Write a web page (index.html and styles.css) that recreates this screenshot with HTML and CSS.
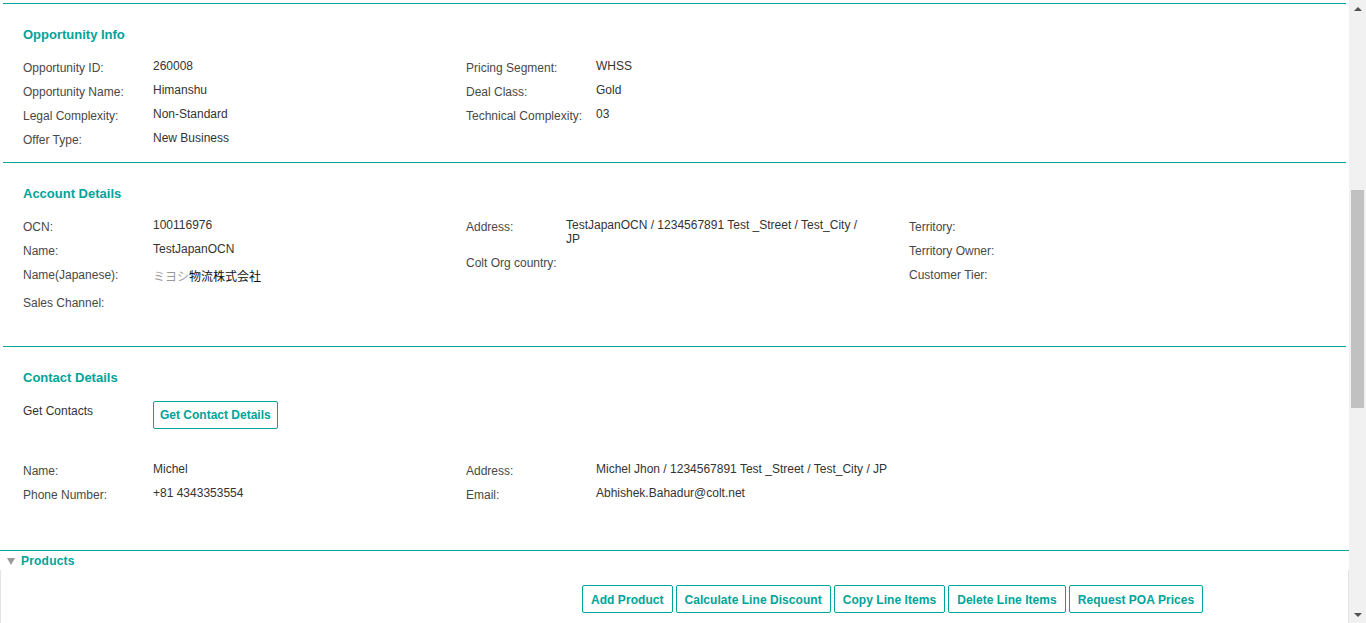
FILE: index.html
```html
<!DOCTYPE html>
<html lang="en">
<head>
<meta charset="utf-8">
<title>Opportunity</title>
<link rel="stylesheet" href="styles.css">
</head>
<body>
<div class="app">
  <div class="main">
    <section class="panel panel--opp">
      <h2 class="panel-title">Opportunity Info</h2>
      <div class="fields">
        <div class="col">
          <div class="row row--first"><span class="label">Opportunity ID:</span><span class="value">260008</span></div>
          <div class="row"><span class="label">Opportunity Name:</span><span class="value">Himanshu</span></div>
          <div class="row"><span class="label">Legal Complexity:</span><span class="value">Non-Standard</span></div>
          <div class="row"><span class="label">Offer Type:</span><span class="value">New Business</span></div>
        </div>
        <div class="col">
          <div class="row row--first"><span class="label">Pricing Segment:</span><span class="value">WHSS</span></div>
          <div class="row"><span class="label">Deal Class:</span><span class="value">Gold</span></div>
          <div class="row"><span class="label">Technical Complexity:</span><span class="value">03</span></div>
        </div>
      </div>
    </section>

    <section class="panel panel--acc">
      <h2 class="panel-title">Account Details</h2>
      <div class="fields">
        <div class="col">
          <div class="row row--first"><span class="label">OCN:</span><span class="value">100116976</span></div>
          <div class="row"><span class="label">Name:</span><span class="value">TestJapanOCN</span></div>
          <div class="row"><span class="label">Name(Japanese):</span><span class="value value--jp"><span class="kana">ミヨシ</span>物流株式会社</span></div>
          <div class="row"><span class="label">Sales Channel:</span><span class="value"></span></div>
        </div>
        <div class="col">
          <div class="row"><span class="label label--narrow">Address:</span><span class="value value--wrap">TestJapanOCN / 1234567891 Test _Street / Test_City / JP</span></div>
          <div class="row"><span class="label label--narrow">Colt Org country:</span><span class="value"></span></div>
        </div>
        <div class="col">
          <div class="row"><span class="label">Territory:</span><span class="value"></span></div>
          <div class="row"><span class="label">Territory Owner:</span><span class="value"></span></div>
          <div class="row"><span class="label">Customer Tier:</span><span class="value"></span></div>
        </div>
      </div>
    </section>

    <section class="panel panel--contact">
      <h2 class="panel-title">Contact Details</h2>
      <div class="get-row">
        <span class="label label--dark">Get Contacts</span>
        <button class="btn btn--small" type="button">Get Contact Details</button>
      </div>
      <div class="fields fields--contact">
        <div class="col">
          <div class="row"><span class="label">Name:</span><span class="value">Michel</span></div>
          <div class="row"><span class="label">Phone Number:</span><span class="value">+81 4343353554</span></div>
        </div>
        <div class="col">
          <div class="row"><span class="label">Address:</span><span class="value">Michel Jhon / 1234567891 Test _Street / Test_City / JP</span></div>
          <div class="row"><span class="label">Email:</span><span class="value">Abhishek.Bahadur@colt.net</span></div>
        </div>
      </div>
    </section>

    <section class="products">
      <div class="products-head">
        <span class="caret"></span>
        <span class="products-title">Products</span>
      </div>
      <div class="products-body">
        <div class="toolbar">
          <button class="btn btn--tool" type="button">Add Product</button>
          <button class="btn btn--tool" type="button">Calculate Line Discount</button>
          <button class="btn btn--tool" type="button">Copy Line Items</button>
          <button class="btn btn--tool" type="button">Delete Line Items</button>
          <button class="btn btn--tool" type="button">Request POA Prices</button>
        </div>
      </div>
    </section>
  </div>

  <div class="scrollbar">
    <div class="sb-btn"><span class="sb-arrow sb-arrow--up"></span></div>
    <div class="sb-track"><div class="sb-thumb"></div></div>
    <div class="sb-btn"><span class="sb-arrow sb-arrow--down"></span></div>
  </div>
</div>
</body>
</html>
```

FILE: styles.css
```css
* { box-sizing: border-box; }

html, body {
  margin: 0;
  padding: 0;
  background: #ffffff;
}

body {
  font-family: "Liberation Sans", Arial, "Noto Sans CJK JP", sans-serif;
  font-size: 12px;
  color: #333333;
  overflow: hidden;
}

.app {
  display: flex;
  width: 1366px;
  height: 623px;
}

.main {
  width: 1349px;
  height: 623px;
  overflow: hidden;
  padding-top: 3px;
}

/* ---------- panels ---------- */
.panel {
  margin-left: 3px;
  width: 1343px;
  border-top: 1px solid #00a499;
  padding: 23px 0 0 20px;
}

.panel--opp { padding-bottom: 15px; }
.panel--acc { padding-bottom: 36px; }
.panel--contact { padding-bottom: 48px; }

.panel-title {
  margin: 0;
  font-size: 13px;
  line-height: 16px;
  font-weight: bold;
  color: #00a499;
}

.fields {
  margin-top: 16px;
  display: grid;
  grid-template-columns: 443px 443px 443px;
}

.fields--contact { margin-top: 33px; }

.col {
  display: flex;
  flex-direction: column;
  gap: 8px;
}

.row {
  display: flex;
  align-items: flex-start;
}

.label {
  flex: 0 0 130px;
  width: 130px;
  padding-top: 2px;
  line-height: 14px;
  color: #484848;
}

.label--narrow {
  flex-basis: 100px;
  width: 100px;
}

.label--dark { color: #333333; }

.value {
  line-height: 14px;
  color: #333333;
  min-height: 14px;
}

.value--wrap { width: 300px; }

.value--jp {
  padding-top: 2px;
  line-height: 18px;
  color: #111111;
  font-family: "Liberation Sans", "Noto Sans CJK JP", sans-serif;
}

.kana { color: #9a9a9a; }

/* ---------- contact ---------- */
.get-row {
  margin-top: 15px;
  display: flex;
  align-items: flex-start;
}

.get-row .label { padding-top: 3px; }

/* ---------- buttons ---------- */
.btn {
  height: 28px;
  padding: 0 7px;
  border: 1px solid #00a499;
  border-radius: 2px;
  background: #ffffff;
  color: #00a499;
  font-family: "Liberation Sans", Arial, sans-serif;
  font-size: 12px;
  font-weight: bold;
  line-height: 26px;
  white-space: nowrap;
  cursor: pointer;
}

.btn--small { padding: 0 6px; }

.btn--tool {
  padding: 1px 8px 0 8px;
  letter-spacing: 0.05px;
}

/* ---------- products ---------- */
.products {
  width: 1349px;
  border-top: 1px solid #00a499;
}

.products-head {
  height: 19px;
  display: flex;
  align-items: center;
  padding-left: 7px;
}

.caret {
  width: 0;
  height: 0;
  border-left: 4px solid transparent;
  border-right: 4px solid transparent;
  border-top: 7px solid #9a9a9a;
  margin-right: 6px;
  margin-top: 1px;
}

.products-title {
  font-size: 12px;
  font-weight: bold;
  color: #00a499;
  line-height: 16px;
  letter-spacing: 0.2px;
}

.products-body {
  width: 1349px;
  height: 60px;
  border-left: 1px solid #e4e4e4;
  border-right: 1px solid #e4e4e4;
  padding-top: 15px;
}

.toolbar {
  display: flex;
  gap: 3px;
  padding-left: 581px;
}

/* ---------- scrollbar ---------- */
.scrollbar {
  width: 17px;
  height: 623px;
  background: #f1f1f1;
  display: flex;
  flex-direction: column;
}

.sb-btn {
  height: 17px;
  display: flex;
  align-items: center;
  justify-content: center;
}

.sb-arrow {
  width: 0;
  height: 0;
  border-left: 4px solid transparent;
  border-right: 4px solid transparent;
}

.sb-arrow--up { border-bottom: 4px solid #505050; }
.sb-arrow--down { border-top: 4px solid #505050; }

.sb-track {
  flex: 1;
}

.sb-thumb {
  margin: 173px 2px 0 2px;
  height: 218px;
  background: #c1c1c1;
}
```
